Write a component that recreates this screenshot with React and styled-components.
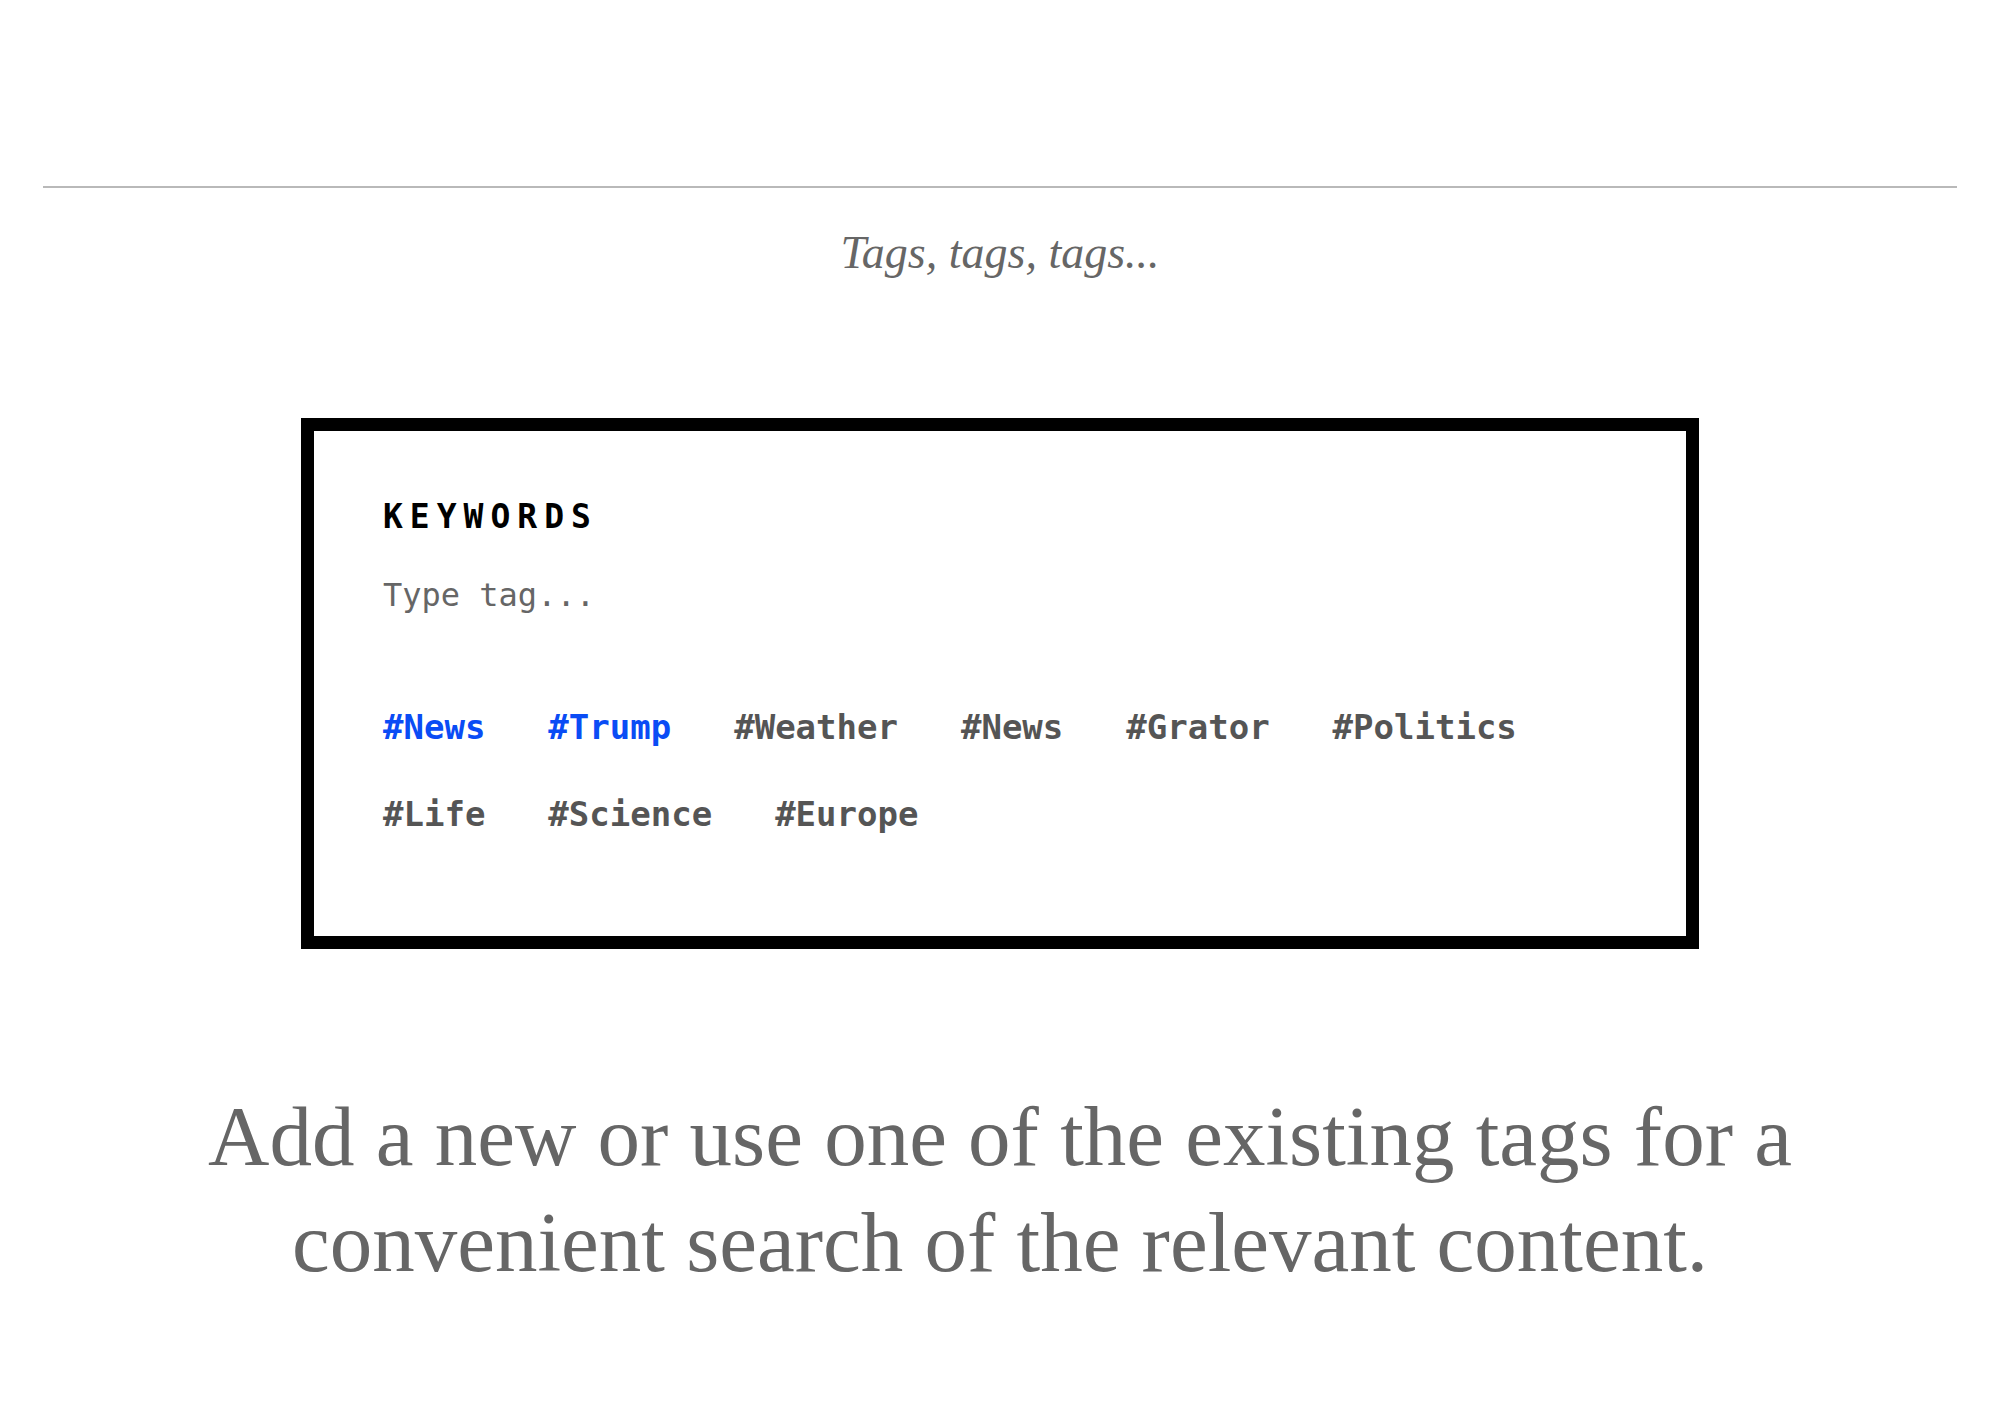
import React from 'react';
import styled, { createGlobalStyle } from 'styled-components';

const tags = [
  { label: '#News', active: true },
  { label: '#Trump', active: true },
  { label: '#Weather' },
  { label: '#News' },
  { label: '#Grator' },
  { label: '#Politics' },
  { label: '#Life' },
  { label: '#Science' },
  { label: '#Europe' },
];

const GlobalStyle = createGlobalStyle`
  html, body {
    margin: 0;
    padding: 0;
    background: #fff;
  }
`;

const Page = styled.div`
  padding: 186px 43px 120px;
`;

const Divider = styled.hr`
  margin: 0;
  border: 0;
  border-top: 2px solid #b9b9b9;
`;

const Title = styled.h2`
  margin: 37px 0 0;
  text-align: center;
  font-family: 'Liberation Serif', serif;
  font-style: italic;
  font-weight: 400;
  font-size: 46px;
  line-height: 56px;
  color: #666;
`;

const Card = styled.section`
  margin: 137px auto 0;
  width: 1398px;
  box-sizing: border-box;
  border: 13px solid #000;
  padding: 66px 69px 78px;
  font-family: 'DejaVu Sans Mono', monospace;
`;

const Label = styled.h3`
  margin: 0;
  font-size: 33px;
  line-height: 40px;
  font-weight: 700;
  letter-spacing: 7px;
  color: #000;
`;

const Input = styled.input`
  display: block;
  margin: 38px 0 0;
  padding: 0;
  border: 0;
  outline: none;
  width: 600px;
  font-family: inherit;
  font-size: 32px;
  line-height: 40px;
  color: #666;
  background: transparent;
  &::placeholder {
    color: #666;
  }
`;

const TagList = styled.div`
  margin-top: 69px;
  display: flex;
  flex-wrap: wrap;
  column-gap: 63px;
  width: 1170px;
`;

const Tag = styled.span`
  font-size: 34px;
  line-height: 87px;
  font-weight: 700;
  color: ${(props) => (props.active ? '#0a4cf5' : '#555')};
  cursor: pointer;
`;

const Lead = styled.p`
  margin: 134px 0 0;
  text-align: center;
  font-family: 'Liberation Serif', serif;
  font-size: 85px;
  line-height: 106px;
  color: #666;
`;

const App = () => (
  <Page>
    <GlobalStyle />
    <Divider />
    <Title>Tags, tags, tags...</Title>
    <Card>
      <Label>KEYWORDS</Label>
      <Input placeholder="Type tag..." />
      <TagList>
        {tags.map((t, i) => (
          <Tag key={i} active={t.active}>
            {t.label}
          </Tag>
        ))}
      </TagList>
    </Card>
    <Lead>
      Add a new or use one of the existing tags for a
      <br />
      convenient search of the relevant content.
    </Lead>
  </Page>
);

export default App;
